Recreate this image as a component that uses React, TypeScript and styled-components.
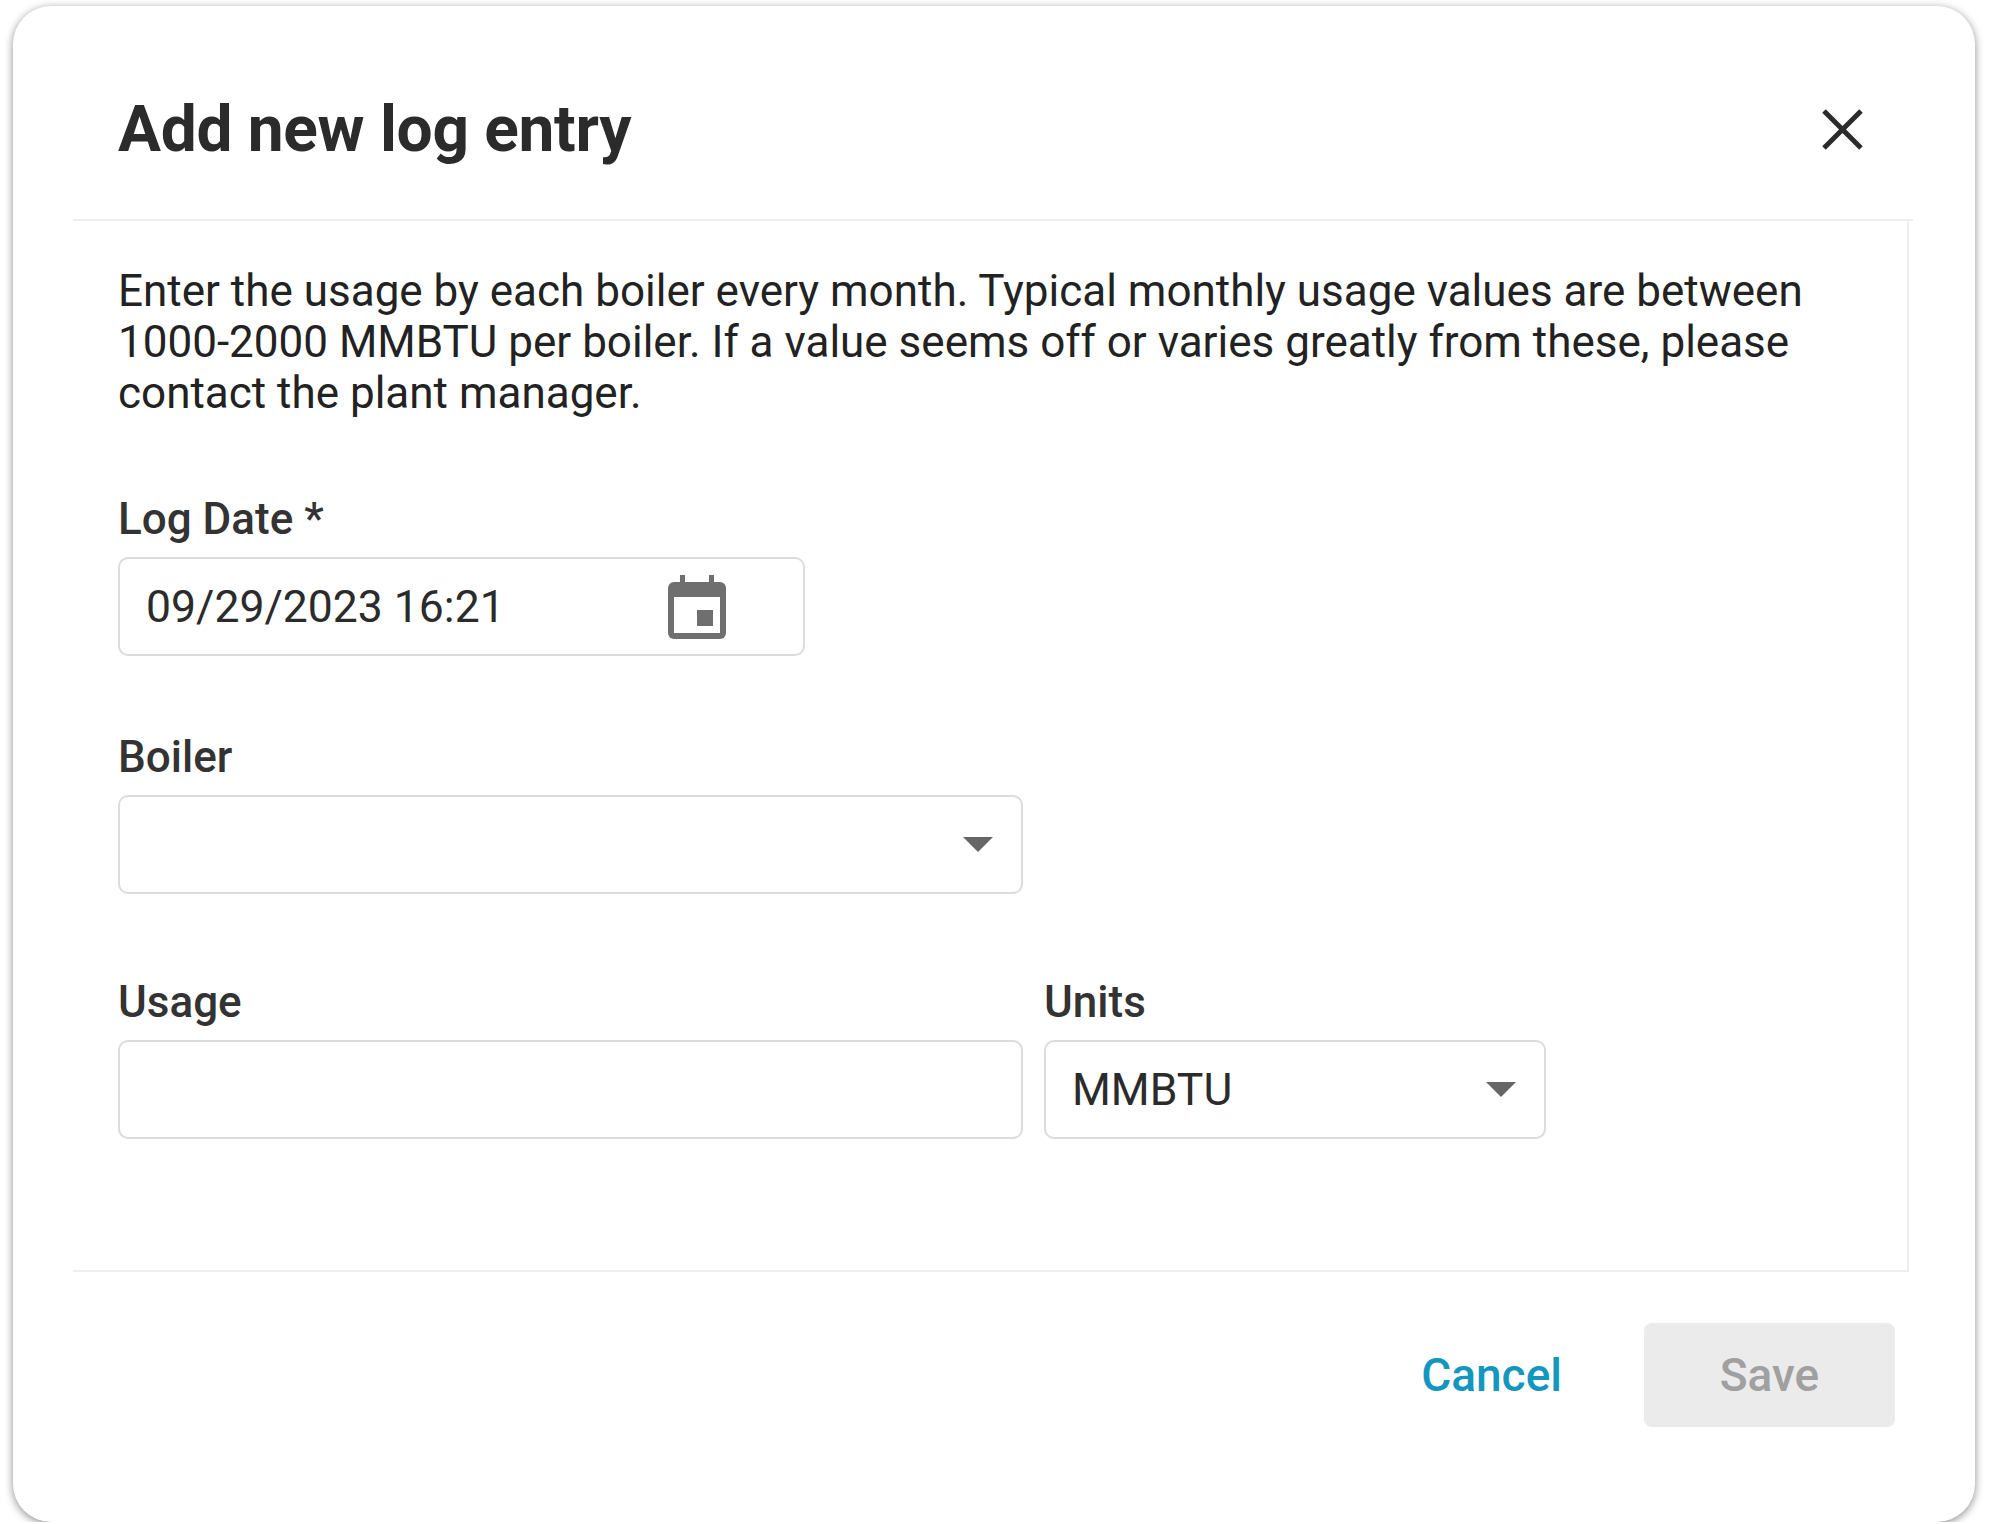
import React from 'react'
import styled, { createGlobalStyle } from 'styled-components'

const Global = createGlobalStyle`
  body { margin: 0; background: #ffffff; font-family: Roboto, "Liberation Sans", sans-serif; color: #2b2b2b; }
`

const Page = styled.div`
  padding: 6px 12px 0 13px;
`
const Card = styled.div`
  width: 1962px;
  height: 1516px;
  background: #fff;
  border-radius: 38px;
  box-shadow: 0 2px 8px rgba(0, 0, 0, 0.45);
  display: flex;
  flex-direction: column;
  overflow: hidden;
`
const Header = styled.div`
  height: 215px;
  display: flex;
  align-items: center;
  justify-content: space-between;
  margin: 0 62px 0 60px;
  padding: 34px 50px 0 45px;
  border-bottom: 2px solid #eeeeee;
  box-sizing: border-box;
`
const Title = styled.h1`
  margin: 0;
  font-size: 64px;
  font-weight: 700;
  color: #2b2b2b;
  letter-spacing: -0.3px;
`
const Close = styled.button`
  border: none;
  background: none;
  padding: 0;
  width: 41px;
  height: 41px;
  cursor: pointer;
`
const Body = styled.div`
  height: 1051px;
  margin: 0 66px 0 60px;
  padding: 45px 0 0 45px;
  border-right: 2px solid #eeeeee;
  border-bottom: 2px solid #eeeeee;
  box-sizing: border-box;
`
const Intro = styled.p`
  margin: 0 0 76px;
  font-size: 44px;
  line-height: 51px;
  color: #222;
  width: 1760px;
`
const Row = styled.div<{ $gap: number }>`
  display: flex;
  gap: 21px;
  margin-bottom: ${(p) => p.$gap}px;
`
const Field = styled.div<{ $w: number }>`
  width: ${(p) => p.$w}px;
  display: flex;
  flex-direction: column;
`
const Label = styled.label`
  font-size: 44px;
  font-weight: 500;
  color: #333;
  margin-bottom: 14px;
  line-height: 48px;
`
const Box = styled.div`
  height: 99px;
  border: 2px solid #dcdcdc;
  border-radius: 10px;
  box-sizing: border-box;
  display: flex;
  align-items: center;
  padding: 0 28px 0 26px;
  font-size: 44.5px;
  color: #2b2b2b;
`
const Value = styled.span`
  flex: 1;
`
const Footer = styled.div`
  flex: 1;
  display: flex;
  justify-content: flex-end;
  align-items: flex-start;
  padding: 51px 80px 0 0;
  gap: 82px;
`
const TextButton = styled.button`
  border: none;
  background: none;
  font-family: inherit;
  font-size: 46px;
  font-weight: 500;
  color: #1497bf;
  height: 104px;
  padding: 0;
`
const SaveButton = styled.button`
  border: none;
  background: #ebebeb;
  color: #a0a0a0;
  font-family: inherit;
  font-size: 46px;
  font-weight: 500;
  width: 251px;
  height: 104px;
  border-radius: 8px;
`

const Caret = () => (
  <svg width="30" height="16" viewBox="0 0 30 16">
    <path d="M0 0h30L15 15z" fill="#666" />
  </svg>
)

export default function App() {
  return (
    <Page>
      <Global />
      <Card>
        <Header>
          <Title>Add new log entry</Title>
          <Close aria-label="close">
            <svg width="41" height="41" viewBox="0 0 41 41">
              <path d="M2 2L39 39M39 2L2 39" stroke="#2b2b2b" strokeWidth="5" />
            </svg>
          </Close>
        </Header>
        <Body>
          <Intro>
            Enter the usage by each boiler every month. Typical monthly usage values are between
            1000-2000 MMBTU per boiler. If a value seems off or varies greatly from these, please
            contact the plant manager.
          </Intro>
          <Row $gap={77}>
            <Field $w={687}>
              <Label>Log Date *</Label>
              <Box>
                <Value>09/29/2023 16:21</Value>
                <svg width="58" height="64" viewBox="0 0 58 64" style={{ marginRight: 49 }}>
                  <rect x="12" y="0" width="5" height="10" fill="#6f6f6f" />
                  <rect x="41" y="0" width="5" height="10" fill="#6f6f6f" />
                  <rect x="0" y="7" width="58" height="57" rx="6" fill="#6f6f6f" />
                  <rect x="6" y="22" width="46" height="36" fill="#fff" />
                  <rect x="29" y="35" width="16" height="16" fill="#6f6f6f" />
                </svg>
              </Box>
            </Field>
          </Row>
          <Row $gap={84}>
            <Field $w={905}>
              <Label>Boiler</Label>
              <Box>
                <Value />
                <Caret />
              </Box>
            </Field>
          </Row>
          <Row $gap={0}>
            <Field $w={905}>
              <Label>Usage</Label>
              <Box />
            </Field>
            <Field $w={502}>
              <Label>Units</Label>
              <Box>
                <Value>MMBTU</Value>
                <Caret />
              </Box>
            </Field>
          </Row>
        </Body>
        <Footer>
          <TextButton>Cancel</TextButton>
          <SaveButton disabled>Save</SaveButton>
        </Footer>
      </Card>
    </Page>
  )
}
